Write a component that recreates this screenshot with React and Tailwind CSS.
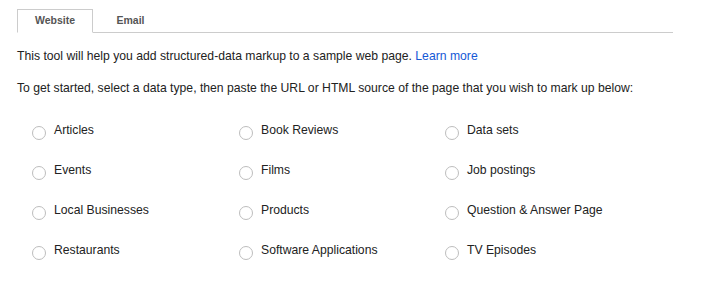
import React from "react";

const items = [
  "Articles", "Book Reviews", "Data sets",
  "Events", "Films", "Job postings",
  "Local Businesses", "Products", "Question & Answer Page",
  "Restaurants", "Software Applications", "TV Episodes",
];

export default function App() {
  return (
    <div className="w-[726px] h-[287px] bg-white pl-[17px] pt-[9px] text-[12.2px] text-[#222]" style={{ fontFamily: '"Liberation Sans", Arial, sans-serif' }}>
      <div className="w-[656px] flex border-b border-[#cccccc] h-[24px]">
        <div className="w-[76px] h-[24px] border border-[#cccccc] border-b-white bg-white flex items-center justify-center text-[10.5px] font-bold text-[#555]">Website</div>
        <div className="w-[75px] h-[24px] flex items-center justify-center text-[10.5px] font-bold text-[#555]">Email</div>
      </div>
      <p className="mt-[15px] leading-[16px]">
        This tool will help you add structured-data markup to a sample web page. <span className="text-[#1558d6]">Learn more</span>
      </p>
      <p className="mt-[16px] leading-[16px]">
        To get started, select a data type, then paste the URL or HTML source of the page that you wish to mark up below:
      </p>
      <div className="mt-[14px] ml-[15px] grid grid-cols-[207px_206px_206px]">
        {items.map((t) => (
          <div key={t} className="h-[40px] flex items-center">
            <span className="w-[14px] h-[14px] rounded-full border border-[#bdbdbd] mr-[8px] mt-[6px] shrink-0"></span>
            <span className="leading-[16px]">{t}</span>
          </div>
        ))}
      </div>
    </div>
  );
}
